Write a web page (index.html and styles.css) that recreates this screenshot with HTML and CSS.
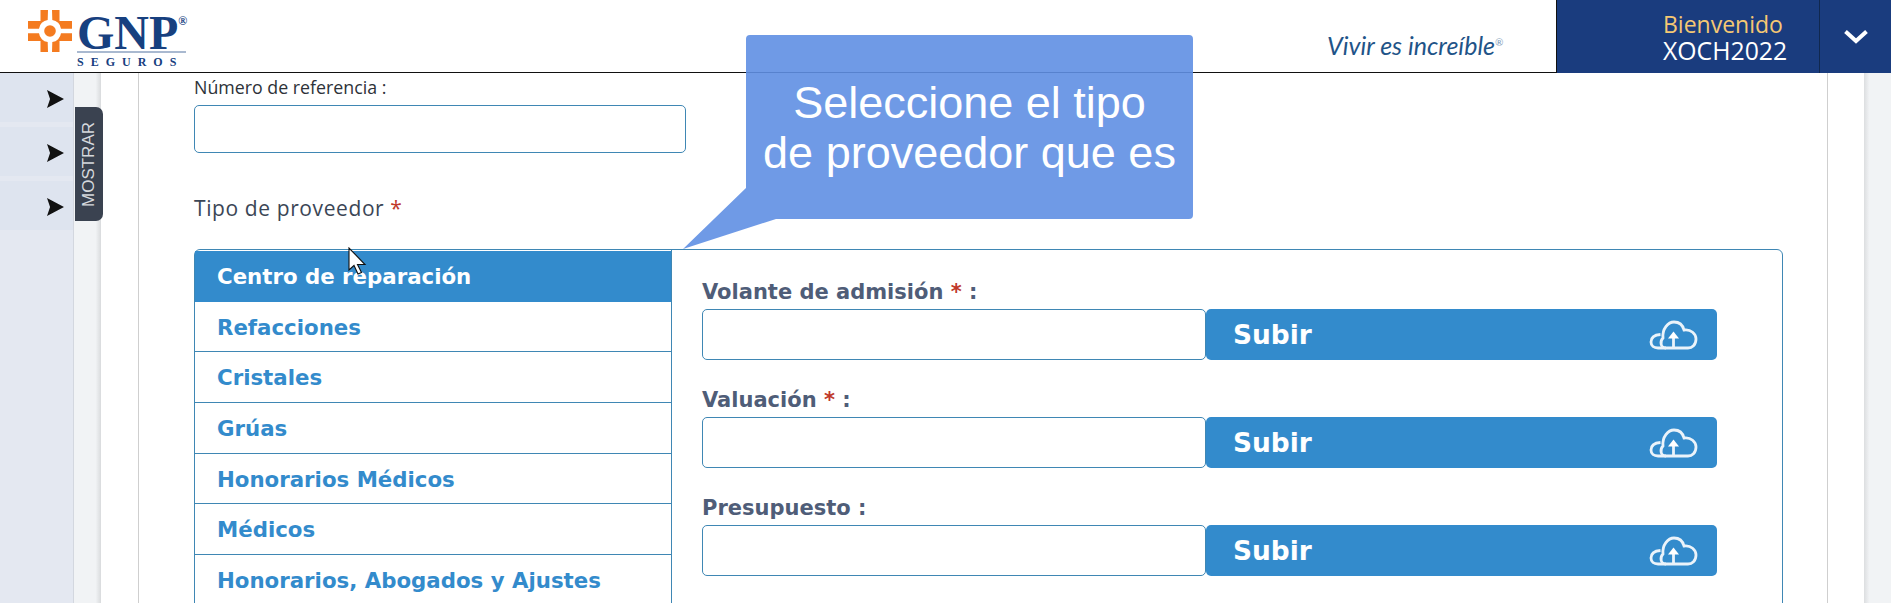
FILE: index.html
```html
<!DOCTYPE html>
<html lang="es">
<head>
    <meta charset="UTF-8">
    <title>GNP Seguros</title>
    <link rel="stylesheet" href="styles.css">
</head>
<body>
    <header class="topbar">
        <div class="logo">
            <svg class="logo-mark" viewBox="-23 -22 46 44">
                <g fill="#f47b20">
                    <path id="corner" d="M-2 -21H-9.500V-10H-22V-2.300H-11A10 10 0 0 1 -2.300 -11Z"/>
                    <use href="#corner" transform="scale(-1 1)"/>
                    <use href="#corner" transform="scale(1 -1)"/>
                    <use href="#corner" transform="scale(-1 -1)"/>
                    <circle r="5.800"/>
                </g>
            </svg>
            <div class="logo-words">
                <div class="logo-name">GNP<sup>®</sup></div>
                <div class="logo-sub">SEGUROS</div>
            </div>
        </div>
        <div class="slogan">Vivir es increíble<sup>®</sup></div>
        <div class="user-box">
            <div class="user-text">
                <div class="user-hello">Bienvenido</div>
                <div class="user-name">XOCH2022</div>
            </div>
        </div>
        <div class="user-menu">
            <svg width="26" height="17" viewBox="0 0 26 17"><path d="M2.500 3.500l10.500 9.500 10.500-9.500" fill="none" stroke="#fff" stroke-width="4"/></svg>
        </div>
    </header>

    <div class="main">
        <aside class="sidebar">
            <div class="side-item"><span class="side-arrow"></span></div>
            <div class="side-item"><span class="side-arrow"></span></div>
            <div class="side-item"><span class="side-arrow"></span></div>
        </aside>
        <div class="gutter"></div>
        <main class="card">
            <label class="ref-label">Número de referencia :</label>
            <div class="ref-input"></div>
            <div class="type-label">Tipo de proveedor <span class="req">*</span></div>

            <section class="panel">
                <nav class="tabs">
                    <a class="tab active">Centro de reparación</a>
                    <a class="tab">Refacciones</a>
                    <a class="tab">Cristales</a>
                    <a class="tab">Grúas</a>
                    <a class="tab">Honorarios Médicos</a>
                    <a class="tab">Médicos</a>
                    <a class="tab">Honorarios, Abogados y Ajustes</a>
                </nav>
                <div class="uploads">
                    <div class="field">
                        <div class="field-label">Volante de admisión <span class="req">*</span> :</div>
                        <div class="file-row">
                            <div class="file-input"></div>
                            <button class="file-btn">Subir
                                <svg class="cloud" viewBox="0 0 49 30"><use href="#cloud-icon"/></svg>
                            </button>
                        </div>
                    </div>
                    <div class="field">
                        <div class="field-label">Valuación <span class="req">*</span> :</div>
                        <div class="file-row">
                            <div class="file-input"></div>
                            <button class="file-btn">Subir
                                <svg class="cloud" viewBox="0 0 49 30"><use href="#cloud-icon"/></svg>
                            </button>
                        </div>
                    </div>
                    <div class="field">
                        <div class="field-label">Presupuesto :</div>
                        <div class="file-row">
                            <div class="file-input"></div>
                            <button class="file-btn">Subir
                                <svg class="cloud" viewBox="0 0 49 30"><use href="#cloud-icon"/></svg>
                            </button>
                        </div>
                    </div>
                </div>
            </section>
        </main>
        <div class="margin-right"></div>
        <div class="scroll-strip"></div>
    </div>

    <!-- icono reutilizado por los botones -->
    <svg class="defs" width="0" height="0">
        <symbol id="cloud-icon" viewBox="0 0 49 30">
            <g fill="none" stroke="#fff" stroke-width="2.8" opacity=".9">
                <path d="M17 28C11 28 11 21 14 18C13 9 19 2 25 2C31 2 34 6 35 10C42 9 47 14 47 19C47 25 43 28 39 28Z"/>
                <path d="M11.500 14.500C5 15 2 18 2 22C2 26 5 28 9 28H17"/>
                <path d="M24.500 28V16"/>
            </g>
            <path d="M19 18.500L24.500 11.500L30 18.500Z" fill="#fff"/>
        </symbol>
    </svg>

    <div class="mostrar"><span>MOSTRAR</span></div>

    <div class="callout">
        <svg class="callout-shape" width="514" height="215" viewBox="0 0 514 215">
            <path d="M67 4a4 4 0 0 1 4-4H510a4 4 0 0 1 4 4V180a4 4 0 0 1-4 4H97L4 214L67 153Z" fill="#5f8fe3" fill-opacity=".9"/>
        </svg>
        <div class="callout-text">Seleccione el tipo<br>de proveedor que es</div>
    </div>

    <svg class="pointer" width="20" height="30" viewBox="0 0 20 30">
        <path d="M1 1V23L6 18.500L10 27L13.500 25.500L9.500 17.500H17Z" fill="#fff" stroke="#111" stroke-width="1.100"/>
    </svg>
</body>
</html>
```

FILE: styles.css
```css
* {
    box-sizing: border-box;
}

html, body {
    margin: 0;
    height: 603px;
    overflow: hidden;
    background: #fff;
}

body {
    position: relative;
    display: flex;
    flex-direction: column;
    font-family: "Open Sans", sans-serif;
    color: #3b4656;
}

/* Barra superior */
.topbar {
    display: flex;
    height: 73px;
    flex-shrink: 0;
    border-bottom: 1px solid #111;
}

.logo {
    display: flex;
    width: 1300px;
    padding: 10px 0 0 27px;
}

.logo-mark {
    width: 46px;
    height: 44px;
    margin-top: -1px;
}

.logo-words {
    margin-left: 4px;
    width: 109px;
    font-family: "Liberation Serif", serif;
    font-weight: bold;
    color: #17407f;
}

.logo-name {
    padding-top: 3px;
    font-size: 48px;
    line-height: 40px;
    height: 43px;
    border-bottom: 2px solid #a9b9d0;
    white-space: nowrap;
}

.logo-name sup {
    font-size: 12px;
    line-height: 0;
    vertical-align: 24px;
}

.logo-sub {
    font-size: 12px;
    line-height: 14px;
    margin-top: 2px;
    letter-spacing: 7px;
    white-space: nowrap;
}

.slogan {
    width: 256px;
    padding: 30px 0 0 27px;
    font-family: "Lato", sans-serif;
    font-style: italic;
    font-size: 25px;
    line-height: 30px;
    color: #1f5488;
    white-space: nowrap;
}

.slogan sup {
    font-size: 10px;
    line-height: 0;
    color: #7d9ab8;
}

.user-box {
    width: 263px;
    height: 73px;
    background: #1a3c7e;
    border-left: 1px solid #111;
    padding-left: 106px;
}

.user-text {
    padding-top: 11px;
    line-height: 26px;
}

.user-hello {
    font-size: 23px;
    color: #f5c873;
}

.user-name {
    font-size: 24.8px;
    color: #fff;
}

.user-menu {
    display: flex;
    align-items: center;
    justify-content: center;
    flex: 1;
    height: 73px;
    background: #1a3c7e;
    border-left: 1px solid #10284f;
}

/* Cuerpo */
.main {
    display: flex;
    flex: 1;
    min-height: 0;
}

.sidebar {
    width: 74px;
    flex-shrink: 0;
    background: #e4e8f1;
    border-right: 1px solid #d3d7df;
}

.side-item {
    position: relative;
    height: 48.5px;
    margin-bottom: 5.5px;
    background: #dee4ef;
}

.side-arrow {
    position: absolute;
    left: 47px;
    top: 17px;
    width: 17px;
    height: 18px;
    background: #111;
    clip-path: polygon(0 0, 100% 50%, 0 100%, 18% 50%);
}

.gutter {
    width: 27px;
    flex-shrink: 0;
    background: linear-gradient(to right, #f1f3f5 80%, #d9dbdd);
}

.card {
    width: 1690px;
    margin-left: 37px;
    flex-shrink: 0;
    padding-left: 55px;
    padding-right: 44px;
    border-left: 1px solid #cfcfcf;
    border-right: 1px solid #cfcfcf;
}

.margin-right {
    width: 36px;
    flex-shrink: 0;
}

.scroll-strip {
    flex: 1;
    background: linear-gradient(to right, #dcdee0, #f1f3f5 20%);
}

.ref-label {
    display: block;
    height: 32px;
    font-size: 17.8px;
    line-height: 28px;
    color: #2d3238;
}

.ref-input {
    width: 492px;
    height: 48px;
    border: 1px solid #3f87b4;
    border-radius: 5px;
}

.type-label {
    margin-top: 40px;
    height: 56px;
    font-size: 21px;
    line-height: 30px;
    letter-spacing: 0.6px;
}

.req {
    color: #c0392b;
}

/* Panel de pestañas */
.panel {
    display: flex;
    height: 420px;
    border: 1px solid #3f87b4;
    border-radius: 6px;
}

.tabs {
    width: 477px;
    flex-shrink: 0;
    padding-top: 1px;
    border-right: 1px solid #3f87b4;
}

.tab {
    display: block;
    height: 50.7px;
    padding-left: 22px;
    font-family: "DejaVu Sans", sans-serif;
    font-weight: bold;
    font-size: 21.3px;
    line-height: 51px;
    color: #338bcc;
    border-bottom: 1px solid #3f87b4;
    white-space: nowrap;
}

.tab.active {
    background: #338bcc;
    color: #fff;
    border-bottom: 0;
}

.uploads {
    flex: 1;
    padding: 22px 0 0 30px;
}

.field {
    height: 108px;
}

.field-label {
    height: 37px;
    font-family: "DejaVu Sans", sans-serif;
    font-weight: bold;
    font-size: 21px;
    line-height: 40px;
    color: #4f5d78;
}

.file-row {
    display: flex;
    height: 51px;
}

.file-input {
    width: 504px;
    border: 1px solid #3f87b4;
    border-radius: 5px;
}

.file-btn {
    display: flex;
    align-items: center;
    justify-content: space-between;
    width: 511px;
    padding: 0 19px 0 27px;
    border: 0;
    border-radius: 5px;
    background: #338bcc;
    color: #fff;
    font-family: "DejaVu Sans", sans-serif;
    font-weight: bold;
    font-size: 26.4px;
}

.cloud {
    width: 49px;
    height: 30px;
}

.defs {
    position: absolute;
}

/* Elementos flotantes */
.mostrar {
    position: absolute;
    left: 75px;
    top: 107px;
    display: flex;
    align-items: center;
    justify-content: center;
    width: 28px;
    height: 114px;
    background: #3a4250;
    border-radius: 0 7px 7px 0;
}

.mostrar span {
    writing-mode: vertical-rl;
    transform: rotate(180deg);
    font-family: "Liberation Sans", sans-serif;
    font-size: 17px;
    color: #d5d8dd;
}

.callout {
    position: absolute;
    left: 679px;
    top: 35px;
    width: 514px;
    height: 215px;
}

.callout-shape {
    position: absolute;
    left: 0;
    top: 0;
}

.callout-text {
    position: relative;
    margin-left: 67px;
    width: 447px;
    padding-top: 43px;
    font-family: "Liberation Sans", sans-serif;
    font-size: 45px;
    line-height: 50px;
    text-align: center;
    color: #fff;
}

.pointer {
    position: absolute;
    left: 348px;
    top: 247px;
}
```
